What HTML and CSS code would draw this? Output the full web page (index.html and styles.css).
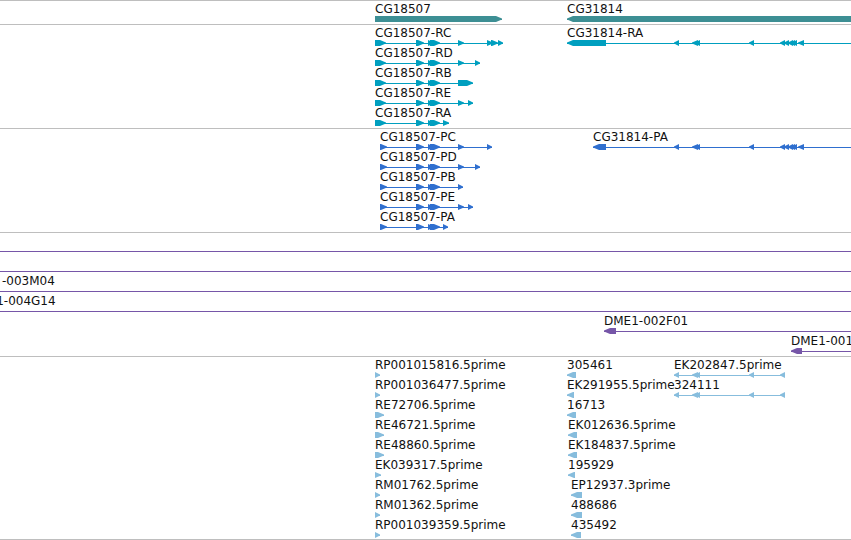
FILE: index.html
```html
<!DOCTYPE html>
<html lang="en">
<head>
<meta charset="utf-8">
<title>Genome browser tracks</title>
<link rel="stylesheet" href="styles.css">
</head>
<body>
<main class="browser" id="browser"></main>
<script src="tracks.js"></script>
</body>
</html>
```
FILE: styles.css
```css
* {
  box-sizing: border-box;
}

body {
  margin: 0;
  background: #fff;
  color: #111;
  font: 12px/16px "DejaVu Sans", sans-serif;
}

.browser {
  border-bottom: 1px solid #bebebe;
}

.track {
  border-top: 1px solid #bebebe;
  padding-bottom: 3px;
}

.track:last-child {
  padding-bottom: 2px;
}

.lane {
  display: grid;
  grid-template-columns: minmax(0, 1fr);
  grid-template-rows: 20px;
  overflow-x: clip;
}

.glyphs,
.label {
  grid-area: 1 / 1;
}

.glyphs {
  display: block;
  width: 100%;
  height: 20px;
  overflow: visible;
  fill: currentColor;
}

.label {
  justify-self: start;
  margin-left: calc(var(--start) * 1px);
  white-space: nowrap;
}

.gene { color: #3d8f94; }
.transcript { color: #009fbf; }
.protein { color: #2f6fcf; }
.clone { color: #7656a8; }
.est { color: #87bddd; }
```
FILE: tracks.js
```js
// A feature is [name, direction, exons, lineEnd, labelStart]; exons are [from, to] pairs.
const EDGE = 4000;
const start = [375, 386], mid = [[416, 424], [428, 434], [430, 440]];
const rna = (name, ...rest) => [name, 1, [start, ...mid, ...rest]];
const protein = (name, ...rest) => [name, 1, [[380, 387], ...mid, ...rest]];
const est = (name, from, to, dir) => [name, dir, [[from, to]]];
const shared = [[674, 679], [692, 698], [695, 700], [749, 754], [780, 785]];
const tail = [...shared, [784, 789], [788, 793], [790, 795], [792, 797], [798, 804]];

const tracks = [
  { kind: "gene", lanes: [
    [["CG18507", 1, [[375, 502]]], ["CG31814", -1, [[567, EDGE]]]]
  ] },
  { kind: "transcript", lanes: [
    [rna("CG18507-RC", [458, 464], [487, 493], [491, 498], [498, 503]),
     ["CG31814-RA", -1, [[567, 606], ...tail], EDGE]],
    [rna("CG18507-RD", [458, 464], [475, 480])],
    [rna("CG18507-RB", [458, 473])],
    [rna("CG18507-RE", [458, 464], [468, 473])],
    [rna("CG18507-RA", [443, 449])]
  ] },
  { kind: "protein", lanes: [
    [protein("CG18507-PC", [458, 464], [487, 492]),
     ["CG31814-PA", -1, [[593, 606], ...tail], EDGE]],
    [protein("CG18507-PD", [458, 464], [475, 480])],
    [protein("CG18507-PB", [458, 463])],
    [protein("CG18507-PE", [458, 464], [468, 473])],
    [protein("CG18507-PA", [443, 448])]
  ] },
  { kind: "clone", lanes: [
    [["", -1, [[-40, -30]], EDGE]],
    [["", -1, [[-40, -30]], EDGE]],
    [["-003M04", -1, [[-33, -21]], EDGE, 2]],
    [["DME1-004G14", -1, [[-31, -20]], EDGE]],
    [["DME1-002F01", -1, [[604, 616]], EDGE]],
    [["DME1-001", -1, [[791, 802]], EDGE]]
  ] },
  { kind: "est", lanes: [
    [est("RP001015816.5prime", 375, 380, 1), est("305461", 567, 576, -1), ["EK202847.5prime", -1, shared]],
    [est("RP001036477.5prime", 375, 380, 1), est("EK291955.5prime", 567, 574, -1), ["324111", -1, shared]],
    [est("RE72706.5prime", 375, 384, 1), est("16713", 567, 576, -1)],
    [est("RE46721.5prime", 375, 384, 1), est("EK012636.5prime", 568, 577, -1)],
    [est("RE48860.5prime", 375, 384, 1), est("EK184837.5prime", 568, 577, -1)],
    [est("EK039317.5prime", 375, 381, 1), est("195929", 568, 575, -1)],
    [est("RM01762.5prime", 375, 380, 1), est("EP12937.3prime", 571, 582, -1)],
    [est("RM01362.5prime", 375, 380, 1), est("488686", 571, 582, -1)],
    [est("RP001039359.5prime", 375, 380, 1), est("435492", 571, 581, -1)]
  ] }
];

// Block arrow whose head points along the strand.
function arrow([from, to], dir) {
  const head = Math.min(6, to - from);
  const [tail, tip] = dir > 0 ? [from, to] : [to, from];
  const neck = tip - dir * head;
  return `M${tail} 15H${neck}L${tip} 17.5V18.5L${neck} 21H${tail}Z`;
}

function glyph([, dir, exons, lineEnd]) {
  const from = exons[0][0];
  const to = lineEnd || exons[exons.length - 1][1];
  return `<rect x="${from}" y="18" width="${to - from}" height="1"/>` +
    exons.map(e => `<path d="${arrow(e, dir)}"/>`).join("");
}

document.getElementById("browser").innerHTML = tracks.map(({ kind, lanes }) =>
  `<section class="track">${lanes.map(features =>
    `<div class="lane"><svg class="glyphs ${kind}" aria-hidden="true">${features.map(glyph).join("")}</svg>` +
    features.filter(f => f[0]).map(f =>
      `<span class="label" style="--start:${f[4] ?? f[2][0][0]}">${f[0]}</span>`).join("") +
    `</div>`).join("")}</section>`).join("");
```
